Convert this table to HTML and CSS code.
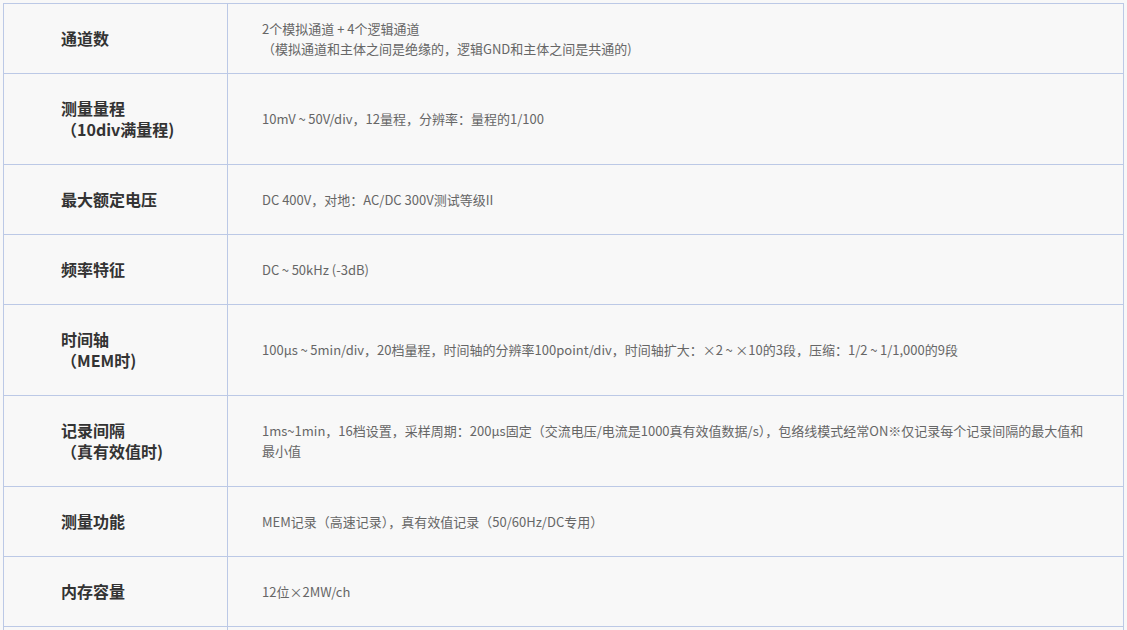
FILE: index.html
```html
<!DOCTYPE html>
<html lang="zh-CN">
<head>
  <meta charset="UTF-8" />
  <title>产品规格</title>
  <link rel="stylesheet" href="styles.css">
</head>
<body>
  <table class="spec">
    <colgroup>
      <col class="col-name">
      <col>
    </colgroup>
    <tr>
      <th>通道数</th>
      <td>2个模拟通道 + 4个逻辑通道<br>（模拟通道和主体之间是绝缘的，逻辑GND和主体之间是共通的)</td>
    </tr>
    <tr>
      <th>测量量程<br>（10div满量程)</th>
      <td>10mV&thinsp;~&thinsp;50V/div，12量程，分辨率：量程的1/100</td>
    </tr>
    <tr>
      <th>最大额定电压</th>
      <td>DC 400V，对地：AC/DC 300V测试等级II</td>
    </tr>
    <tr>
      <th>频率特征</th>
      <td>DC&thinsp;~&thinsp;50kHz (-3dB)</td>
    </tr>
    <tr>
      <th>时间轴<br>（MEM时)</th>
      <td>100μs&thinsp;~&thinsp;5min/div，20档量程，时间轴的分辨率100point/div，时间轴扩大：×2&thinsp;~&thinsp;×10的3段，压缩：1/2&thinsp;~&thinsp;1/1,000的9段</td>
    </tr>
    <tr>
      <th>记录间隔<br>（真有效值时)</th>
      <td>1ms~1min，16档设置，采样周期：200μs固定（交流电压/电流是1000真有效值数据/s），包络线模式经常ON※仅记录每个记录间隔的最大值和<br>最小值</td>
    </tr>
    <tr>
      <th>测量功能</th>
      <td>MEM记录（高速记录），真有效值记录（50/60Hz/DC专用）</td>
    </tr>
    <tr>
      <th>内存容量</th>
      <td>12位×2MW/ch</td>
    </tr>
    <tr>
      <th>触发功能</th>
      <td>电平触发、窗口触发、逻辑触发，预触发可设置</td>
    </tr>
  </table>
</body>
</html>
```

FILE: styles.css
```css
body {
  margin: 0;
  padding: 3px 3px 20px 3px;
  background: #f8f8f8;
  font-family: "Noto Sans CJK SC", sans-serif;
}

.spec {
  width: 100%;
  border-collapse: collapse;
  background: #f8f8f8;
}

.spec .col-name {
  width: 224px;
}

.spec th,
.spec td {
  border: 1px solid #bcc9e6;
  vertical-align: middle;
  text-align: left;
}

.spec th {
  padding: 24px 20px 24px 57px;
  font-size: 16px;
  line-height: 21px;
  font-weight: bold;
  color: #333;
}

.spec td {
  padding: 10px 34px;
  font-size: 13px;
  line-height: 20px;
  color: #666;
}
```
